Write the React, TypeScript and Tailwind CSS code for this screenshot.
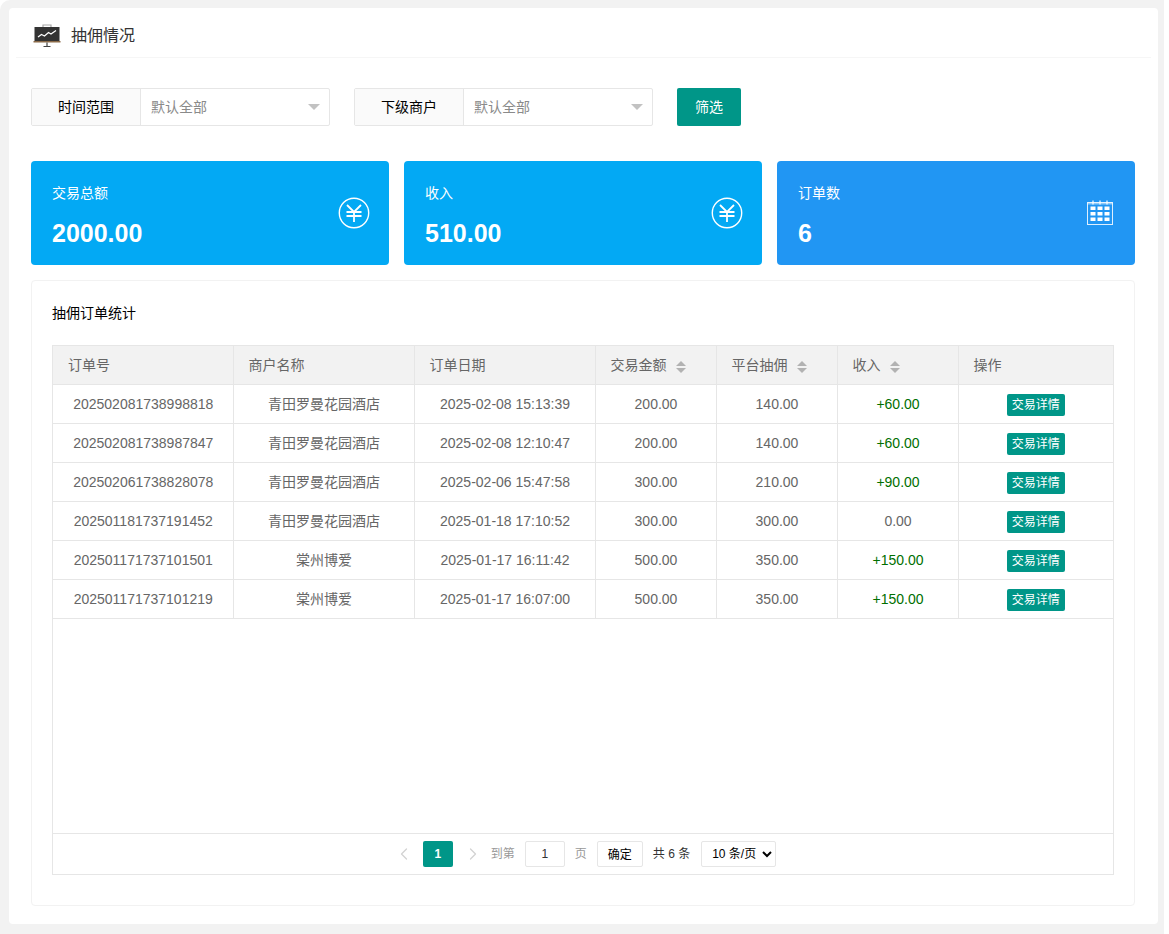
import { ChevronLeft, ChevronRight } from 'lucide-react'

interface OrderRow {
  orderNo: string
  merchant: string
  date: string
  amount: string
  fee: string
  income: string
}

const rows: OrderRow[] = [
  { orderNo: '202502081738998818', merchant: '青田罗曼花园酒店', date: '2025-02-08 15:13:39', amount: '200.00', fee: '140.00', income: '+60.00' },
  { orderNo: '202502081738987847', merchant: '青田罗曼花园酒店', date: '2025-02-08 12:10:47', amount: '200.00', fee: '140.00', income: '+60.00' },
  { orderNo: '202502061738828078', merchant: '青田罗曼花园酒店', date: '2025-02-06 15:47:58', amount: '300.00', fee: '210.00', income: '+90.00' },
  { orderNo: '202501181737191452', merchant: '青田罗曼花园酒店', date: '2025-01-18 17:10:52', amount: '300.00', fee: '300.00', income: '0.00' },
  { orderNo: '202501171737101501', merchant: '棠州博爱', date: '2025-01-17 16:11:42', amount: '500.00', fee: '350.00', income: '+150.00' },
  { orderNo: '202501171737101219', merchant: '棠州博爱', date: '2025-01-17 16:07:00', amount: '500.00', fee: '350.00', income: '+150.00' },
]

function BoardIcon() {
  return (
    <svg width="28" height="24" viewBox="0 0 28 24" className="block">
      <path d="M10 3V1h8V3" fill="none" stroke="#a8a8a8" strokeWidth="1.2" />
      <rect x="1.500" y="3" width="25" height="14.500" fill="#333" />
      <rect x="0.500" y="17" width="27" height="1.500" fill="#8a6a48" />
      <path d="M5 13l3.500-2.500 3 1.500 4-3.500 2.500 1.500 5-3.500" fill="none" stroke="#fff" strokeWidth="1.2" />
      <path d="M14 18.500v4M10.500 22.500h7" stroke="#444" strokeWidth="1.2" />
    </svg>
  )
}

function YuanIcon() {
  return (
    <svg width="32" height="32" viewBox="0 0 32 32" className="block">
      <circle cx="16" cy="16" r="14.700" fill="none" stroke="#fff" strokeWidth="1.400" />
      <path d="M9 8l7 7 7-7M8.500 15h15M8.500 19h15M16 15v10" fill="none" stroke="#fff" strokeWidth="1.800" />
    </svg>
  )
}

function CalendarIcon() {
  const cells = [0, 1, 2]
  return (
    <svg width="28" height="26" viewBox="0 0 28 26" className="mr-[2px] block">
      <rect x="1.500" y="2.500" width="25" height="22" fill="none" stroke="#fff" strokeOpacity="0.85" strokeWidth="1" />
      <path d="M1.500 3.500h25" stroke="#fff" strokeOpacity="0.5" strokeWidth="2" />
      <path d="M7 0.500v4M14 0.500v4M21 0.500v4" stroke="#fff" strokeOpacity="0.8" strokeWidth="1.500" />
      {cells.map((r) =>
        cells.map((c) => (
          <rect key={`${r}-${c}`} x={4.5 + c * 7} y={6.5 + r * 5.5} width="5" height="3.500" fill="#fff" />
        )),
      )}
    </svg>
  )
}

function FilterSelect({ label }: { label: string }) {
  return (
    <div className="flex h-[38px] w-[299px] rounded-[2px] border border-[#e6e6e6]">
      <div className="flex w-[109px] items-center justify-center border-r border-[#e6e6e6] bg-[#fafafa] text-[14px] text-black">
        {label}
      </div>
      <div className="flex flex-1 items-center justify-between pl-[10px] pr-[9px] text-[14px] text-[#8a8a8a]">
        <span>默认全部</span>
        <span className="h-0 w-0 border-x-[6px] border-t-[6px] border-x-transparent border-t-[#c2c2c2]" />
      </div>
    </div>
  )
}

function StatCard({ title, value, color, icon }: { title: string; value: string; color: string; icon: React.ReactNode }) {
  return (
    <div className={`flex h-[104px] items-center justify-between rounded-[4px] pl-[21px] pr-[19px] text-white ${color}`}>
      <div className="pt-[6px]">
        <div className="text-[14px] leading-[20px]">{title}</div>
        <div className="mt-[14px] text-[25px] font-bold leading-[32px]">{value}</div>
      </div>
      {icon}
    </div>
  )
}

function SortIcon() {
  return (
    <span className="ml-[9px] inline-flex flex-col gap-[2px] align-middle">
      <span className="h-0 w-0 border-x-[5px] border-b-[5px] border-x-transparent border-b-[#b2b2b2]" />
      <span className="h-0 w-0 border-x-[5px] border-t-[5px] border-x-transparent border-t-[#b2b2b2]" />
    </span>
  )
}

const headCell = 'border-r border-[#e6e6e6] pl-[15px] pt-[2px] text-left font-normal last:border-r-0'
const bodyCell = 'border-r border-b border-[#e6e6e6] pl-[1px] pt-[1px] text-center last:border-r-0'

export default function App() {
  return (
    <div
      className="h-[934px] w-[1164px] rounded-tl-[10px] bg-[#f2f2f2] pl-[9px] pr-[6px] pt-[8px] pb-[10px] text-[14px] text-[#666]"
      style={{ fontFamily: '"Liberation Sans", "Noto Sans CJK SC", sans-serif' }}
    >
      <div className="h-full rounded-[4px] bg-white">
        {/* Header */}
        <div className="px-[7px]">
          <div className="flex h-[50px] items-center gap-[10px] border-b border-[#f6f6f6] pl-[17px] pt-[6px] text-[16px] text-[#333]">
            <BoardIcon />
            <span>抽佣情况</span>
          </div>
        </div>

        <div className="pl-[22px] pr-[23px]">
          {/* Filters */}
          <div className="mt-[30px] flex gap-[24px]">
            <FilterSelect label="时间范围" />
            <FilterSelect label="下级商户" />
            <button type="button" className="h-[38px] w-[64px] rounded-[2px] bg-[#009688] text-[14px] text-white">
              筛选
            </button>
          </div>

          {/* Stat cards */}
          <div className="mt-[35px] grid grid-cols-3 gap-[15px]">
            <StatCard title="交易总额" value="2000.00" color="bg-[#03a9f4]" icon={<YuanIcon />} />
            <StatCard title="收入" value="510.00" color="bg-[#03a9f4]" icon={<YuanIcon />} />
            <StatCard title="订单数" value="6" color="bg-[#2196f3]" icon={<CalendarIcon />} />
          </div>

          {/* Table card */}
          <div className="mt-[15px] h-[626px] rounded-[4px] border border-[#f2f2f2] px-[20px]">
            <div className="h-[64px] pt-[22px] text-[14px] leading-[20px] text-black">抽佣订单统计</div>
            <div className="flex h-[530px] flex-col border border-[#e6e6e6]">
              <div className="flex-1">
                <table className="w-full table-fixed border-collapse">
                  <colgroup>
                    <col className="w-[180px]" />
                    <col className="w-[181px]" />
                    <col className="w-[181px]" />
                    <col className="w-[121px]" />
                    <col className="w-[121px]" />
                    <col className="w-[121px]" />
                    <col />
                  </colgroup>
                  <thead>
                    <tr className="h-[38px] border-b border-[#e6e6e6] bg-[#f2f2f2]">
                      <th className={headCell}>订单号</th>
                      <th className={headCell}>商户名称</th>
                      <th className={headCell}>订单日期</th>
                      <th className={headCell}>交易金额<SortIcon /></th>
                      <th className={headCell}>平台抽佣<SortIcon /></th>
                      <th className={headCell}>收入<SortIcon /></th>
                      <th className={headCell}>操作</th>
                    </tr>
                  </thead>
                  <tbody>
                    {rows.map((row) => (
                      <tr key={row.orderNo} className="h-[39px]">
                        <td className={bodyCell}>{row.orderNo}</td>
                        <td className={bodyCell}>{row.merchant}</td>
                        <td className={bodyCell}>{row.date}</td>
                        <td className={bodyCell}>{row.amount}</td>
                        <td className={bodyCell}>{row.fee}</td>
                        <td className={`${bodyCell} ${row.income === '0.00' ? '' : 'text-[#006f00]'}`}>{row.income}</td>
                        <td className="border-b border-[#e6e6e6] pt-[3px] text-center">
                          <span className="inline-block h-[22px] rounded-[2px] bg-[#009688] px-[5px] text-[12px] leading-[22px] text-white">
                            交易详情
                          </span>
                        </td>
                      </tr>
                    ))}
                  </tbody>
                </table>
              </div>

              {/* Pagination */}
              <div className="flex h-[41px] items-center justify-center border-t border-[#e6e6e6] pl-[4px] text-[12px]">
                <ChevronLeft size={20} strokeWidth={1.500} className="text-[#d2d2d2]" />
                <span className="ml-[9px] flex h-[26px] w-[30px] items-center justify-center rounded-[2px] bg-[#009688] font-bold text-white">
                  1
                </span>
                <ChevronRight size={20} strokeWidth={1.500} className="ml-[10px] text-[#d2d2d2]" />
                <span className="ml-[8px] text-[#999]">到第</span>
                <input
                  readOnly
                  value="1"
                  className="ml-[10px] h-[26px] w-[40px] rounded-[2px] border border-[#e6e6e6] text-center text-[12px] text-[#333] outline-none"
                />
                <span className="ml-[10px] text-[#999]">页</span>
                <button type="button" className="ml-[10px] h-[26px] w-[46px] rounded-[2px] border border-[#e6e6e6] bg-white pt-[2px] text-[12px] text-black">
                  确定
                </button>
                <span className="ml-[10px] text-[#333]">共 6 条</span>
                <select className="ml-[11px] h-[26px] w-[75px] rounded-[2px] border border-[#e6e6e6] bg-white pl-[6px] text-[12px] text-black outline-none">
                  <option>10 条/页</option>
                  <option>20 条/页</option>
                </select>
              </div>
            </div>
          </div>
        </div>
      </div>
    </div>
  )
}
